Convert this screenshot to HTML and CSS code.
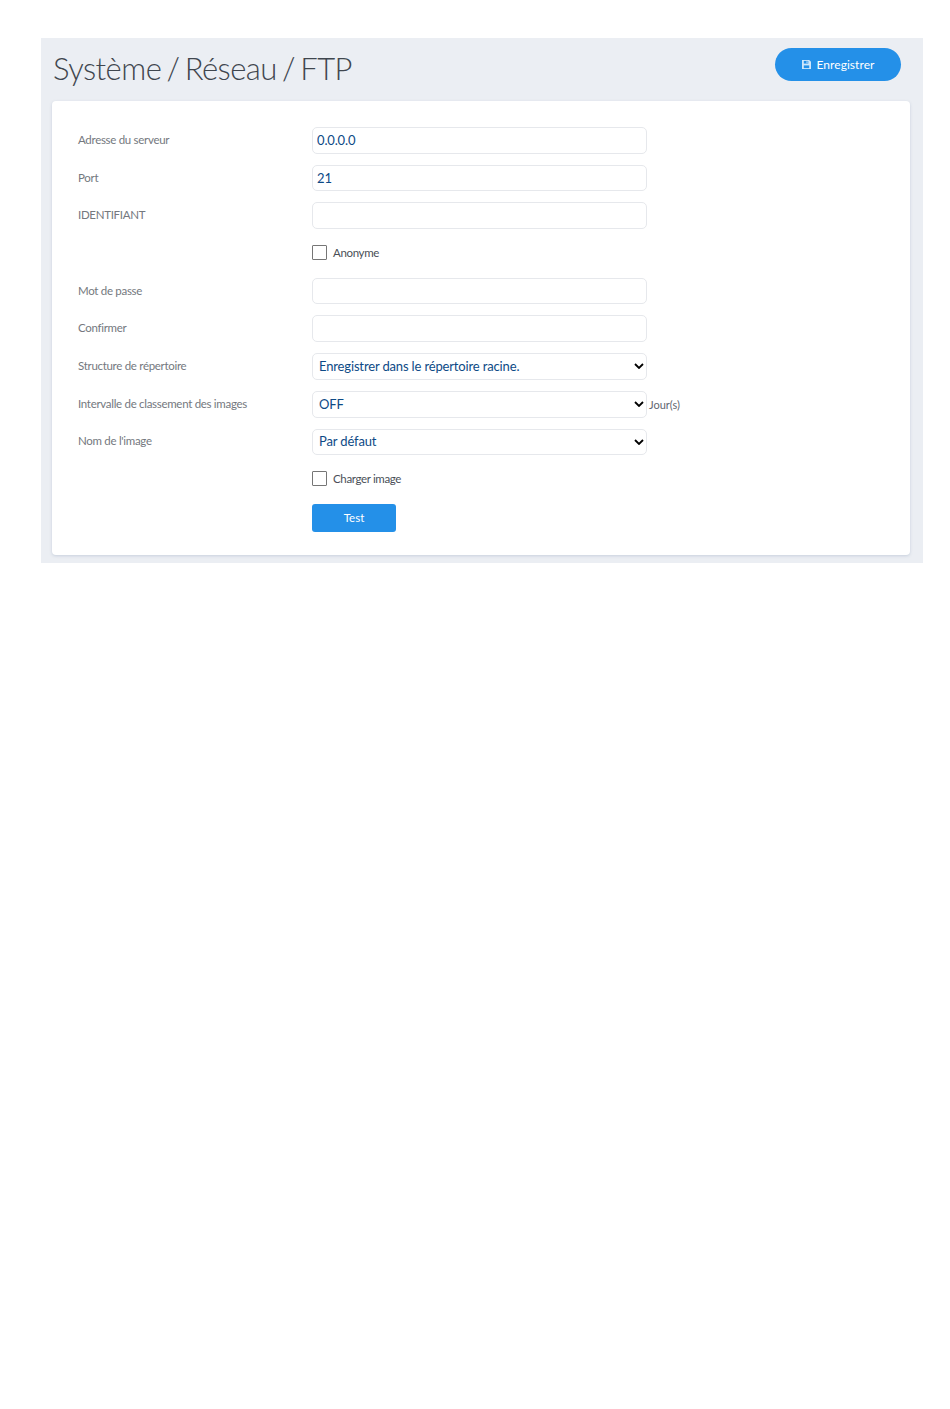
FILE: index.html
```html
<!DOCTYPE html>
<html lang="fr">
<head>
<meta charset="utf-8">
<title>FTP</title>
<link rel="stylesheet" href="styles.css">
</head>
<body>
<main class="panel">
  <header class="head">
    <h1 class="title">Système / Réseau / FTP</h1>
    <button class="save" type="button">
      <svg class="save-icon" viewBox="0 0 10 10" width="9" height="9" aria-hidden="true">
        <path d="M0 0h8l2 2v8H0z" fill="#cfe6fb"/>
        <path d="M2 1h5v3H2z" fill="#2490e8"/>
        <path d="M5 1.500h1.200v2H5z" fill="#cfe6fb"/>
        <path d="M2 6h6v3H2z" fill="#2490e8"/>
      </svg>
      Enregistrer
    </button>
  </header>
  <section class="card">
    <form class="form">
      <label class="label" for="a">Adresse du serveur</label>
      <div class="field"><input class="input" id="a" type="text" value="0.0.0.0"></div>
      <label class="label" for="b">Port</label>
      <div class="field"><input class="input" id="b" type="text" value="21"></div>
      <label class="label" for="c">IDENTIFIANT</label>
      <div class="field"><input class="input" id="c" type="text"></div>
      <div class="field span"><label class="check"><input class="box" type="checkbox">Anonyme</label></div>
      <label class="label" for="d">Mot de passe</label>
      <div class="field"><input class="input" id="d" type="password"></div>
      <label class="label" for="e">Confirmer</label>
      <div class="field"><input class="input" id="e" type="password"></div>
      <label class="label" for="f">Structure de répertoire</label>
      <div class="field"><select class="input select" id="f"><option>Enregistrer dans le répertoire racine.</option></select></div>
      <label class="label" for="g">Intervalle de classement des images</label>
      <div class="field"><select class="input select" id="g"><option>OFF</option></select><span class="unit">Jour(s)</span></div>
      <label class="label" for="h">Nom de l'image</label>
      <div class="field"><select class="input select" id="h"><option>Par défaut</option></select></div>
      <div class="field span"><label class="check"><input class="box" type="checkbox">Charger image</label></div>
      <div class="field span"><button class="test" type="button">Test</button></div>
    </form>
  </section>
</main>
</body>
</html>
```

FILE: styles.css
```css
* { box-sizing: border-box; }
html, body { margin: 0; background: #fff; }
body {
  padding: 38px 27px 0 41px;
  font-family: Lato, "Liberation Sans", sans-serif;
}
.panel {
  background: #ebeef3;
  padding: 0 13px 8px 11px;
}
.head {
  height: 63px;
  display: flex;
  justify-content: space-between;
  align-items: flex-start;
}
.title {
  margin: 10px 0 0 1px;
  font-size: 31px;
  line-height: 40px;
  font-weight: 300;
  letter-spacing: -.55px;
  word-spacing: -2.600px;
  color: #3f464e;
}
.save {
  width: 126px;
  height: 33px;
  margin: 10px 9px 0 0;
  border: 0;
  border-radius: 17px;
  background: #2490e8;
  color: #fff;
  font: 400 12px Lato, sans-serif;
  letter-spacing: .05px;
  display: flex;
  align-items: center;
  justify-content: center;
  gap: 6px;
}
.card {
  height: 454px;
  background: #fff;
  border-radius: 4px;
  box-shadow: 0 1px 3px rgba(120, 140, 170, .3);
  padding: 26px 26px 0;
}
.form {
  display: grid;
  grid-template-columns: 234px 1fr;
  grid-auto-rows: 26.700px;
  row-gap: 11px;
  align-items: center;
}
.label {
  position: relative;
  top: -1px;
  font-size: 11.500px;
  letter-spacing: -.3px;
  color: #74787e;
}
.field {
  display: flex;
  align-items: center;
  height: 100%;
}
.span { grid-column: 2; }
.input {
  width: 335px;
  height: 100%;
  margin: 0;
  border: 1px solid #e6e8ec;
  border-radius: 5px;
  background: #fff;
  padding: 0 4px;
  font: 400 13px Lato, sans-serif;
  letter-spacing: -.15px;
  color: #0d4a86;
  outline: none;
}
.select {
  appearance: none;
  padding: 0 6px 1px;
  background-image: url("data:image/svg+xml,%3Csvg xmlns='http://www.w3.org/2000/svg' width='10' height='6'%3E%3Cpath d='M1 1l4 4 4-4' fill='none' stroke='%23000' stroke-width='1.800'/%3E%3C/svg%3E");
  background-repeat: no-repeat;
  background-position: right 2px center;
}
.unit {
  margin-left: 2px;
  font-size: 11px;
  letter-spacing: -.02px;
  color: #5f6670;
}
.check {
  position: relative;
  top: -1px;
  display: flex;
  align-items: center;
  font-size: 11.500px;
  letter-spacing: -.35px;
  color: #4a4f57;
}
.box {
  appearance: none;
  width: 15px;
  height: 15px;
  margin: 0 6px 0 0;
  border: 1px solid #767676;
  border-radius: 1px;
  background: #fff;
}
.test {
  width: 84px;
  height: 28px;
  margin-top: 1px;
  border: 0;
  border-radius: 3px;
  background: #2490e8;
  color: #fff;
  font: 400 11.500px Lato, sans-serif;
}
```
